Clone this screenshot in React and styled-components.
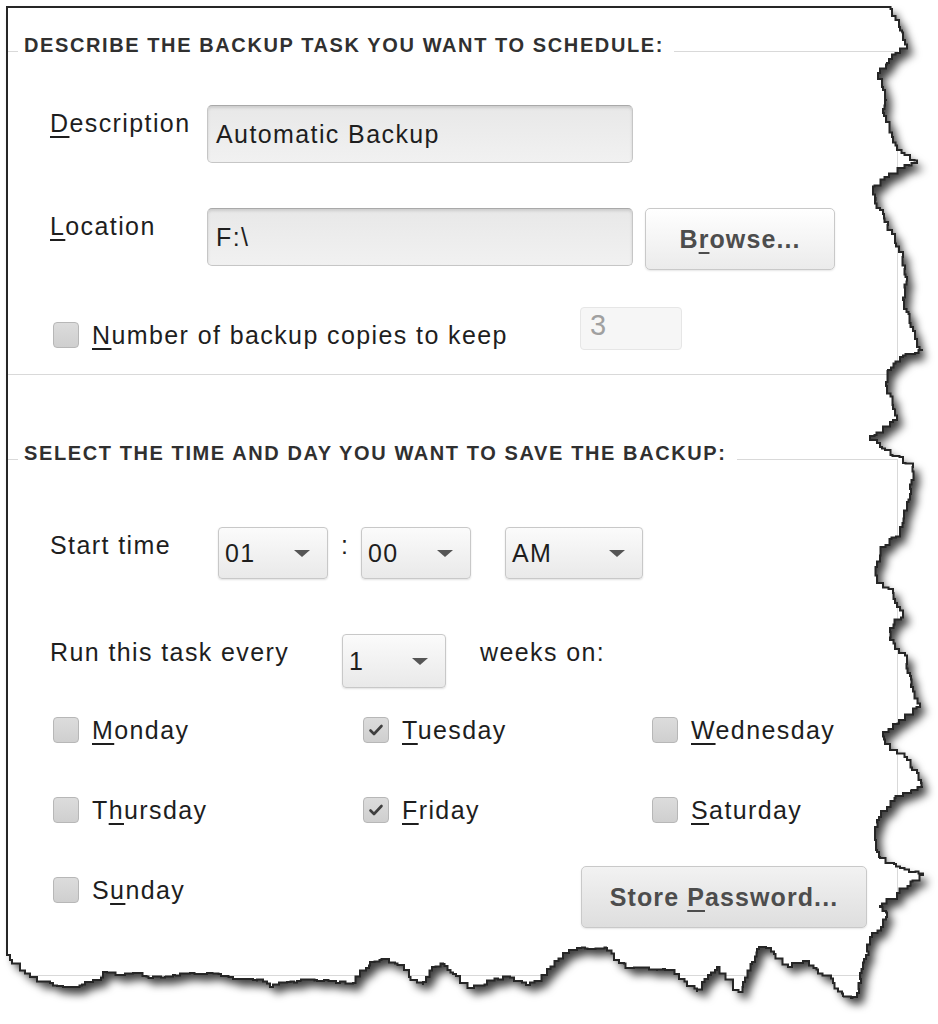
import React, { useMemo } from "react";
import styled, { createGlobalStyle } from "styled-components";

const GlobalStyle = createGlobalStyle`
  html, body { margin: 0; padding: 0; background: #ffffff; }
  body {
    font-family: "Liberation Sans", Arial, sans-serif;
    overflow: hidden;
  }
`;

/* ---------- torn paper outline ---------- */
const RIGHT_AND_BOTTOM = [
  [887, 7], [897, 20], [900, 27], [903, 37], [907, 47], [900, 53], [887, 63], [877, 73],
  [883, 87], [887, 100], [883, 113], [890, 127], [893, 140], [897, 150], [917, 163],
  [900, 168], [887, 177], [873, 190], [875, 200], [883, 210], [890, 230], [903, 257],
  [907, 277], [903, 300], [910, 323], [917, 343], [923, 350], [903, 357], [887, 370],
  [887, 390], [893, 405], [897, 420], [883, 430], [870, 438], [880, 447], [903, 460],
  [913, 467], [913, 480], [907, 507], [900, 533], [883, 547], [877, 567], [877, 580],
  [893, 593], [900, 607], [903, 615], [890, 628], [890, 640], [903, 653], [910, 673],
  [913, 687], [920, 707], [903, 720], [883, 733], [890, 747], [907, 760], [917, 773],
  [923, 787], [903, 793], [887, 807], [877, 820], [875, 840], [880, 857], [900, 868],
  [923, 875], [897, 895], [880, 907], [887, 917], [870, 940], [857, 997],
  [843, 997], [833, 980], [803, 960], [790, 967], [763, 947], [757, 950], [740, 992],
  [717, 967], [697, 992], [670, 970], [630, 968], [617, 960], [607, 947], [577, 948],
  [563, 955], [547, 973], [530, 985], [510, 977], [487, 982], [470, 988], [460, 980],
  [443, 964], [433, 967], [423, 985], [413, 980], [400, 965], [387, 959], [370, 962],
  [360, 972], [353, 983], [317, 980], [287, 982], [273, 987], [267, 982], [233, 977],
  [210, 973], [173, 975], [153, 978], [133, 973], [120, 975], [107, 972], [93, 982],
  [67, 987], [50, 983], [30, 977], [20, 967], [10, 960], [7, 955],
];

function mulberry32(a) {
  return function () {
    a |= 0;
    a = (a + 0x6d2b79f5) | 0;
    let t = Math.imul(a ^ (a >>> 15), 1 | a);
    t = (t + Math.imul(t ^ (t >>> 7), 61 | t)) ^ t;
    return ((t ^ (t >>> 14)) >>> 0) / 4294967296;
  };
}

function buildPath() {
  const rand = mulberry32(20240611);
  const pts = RIGHT_AND_BOTTOM;
  const out = [pts[0]];
  for (let i = 0; i < pts.length - 1; i++) {
    const [ax, ay] = pts[i];
    const [bx, by] = pts[i + 1];
    const len = Math.hypot(bx - ax, by - ay);
    const steps = Math.max(1, Math.round(len / 4));
    for (let s = 1; s <= steps; s++) {
      const t = s / steps;
      let x = ax + (bx - ax) * t;
      let y = ay + (by - ay) * t;
      if (s < steps) {
        x += (rand() - 0.5) * 3;
        y += (rand() - 0.5) * 3;
      }
      x = Math.round(x * 2) / 2;
      y = Math.round(y * 2) / 2;
      const prev = out[out.length - 1];
      if (rand() < 0.5) out.push([x, prev[1]]);
      else out.push([prev[0], y]);
      out.push([x, y]);
    }
  }
  return "M7 7 L" + out.map((p) => p[0] + " " + p[1]).join(" L") + " L7 7 Z";
}

/* ---------- layout ---------- */
const Stage = styled.div`
  position: relative;
  width: 938px;
  height: 1024px;
  overflow: hidden;
  background: #ffffff;
`;

const PaperLayer = styled.svg`
  position: absolute;
  left: 0;
  top: 0;
  z-index: 0;
`;

const OutlineLayer = styled.svg`
  position: absolute;
  left: 0;
  top: 0;
  z-index: 2;
  pointer-events: none;
`;

const Content = styled.div`
  position: relative;
  z-index: 1;
  height: 100%;
  box-sizing: border-box;
  padding: 33px 0 0 7px;
  color: #1e1e1e;
  font-size: 25px;
  letter-spacing: 1.4px;
`;

const GroupBox = styled.section`
  width: 891px;
  margin-top: ${(p) => p.$mt || 0}px;
`;

const HeaderRow = styled.div`
  display: flex;
  align-items: flex-end;
  height: 19px;
`;

const LeadLine = styled.div`
  width: 11px;
  border-bottom: 1px solid #d9d9d9;
`;

const TrailLine = styled.div`
  flex: 1;
  border-bottom: 1px solid #d9d9d9;
`;

const Title = styled.h2`
  margin: 0 10px -5px 6px;
  font-size: 20px;
  line-height: 24px;
  font-weight: bold;
  letter-spacing: 1.6px;
  color: #303030;
  white-space: nowrap;
`;

const Body = styled.div`
  border: 1px solid #d9d9d9;
  border-top: none;
  padding: ${(p) => p.$pt}px 30px ${(p) => p.$pb}px 42px;
`;

const Row = styled.div`
  display: flex;
  align-items: flex-start;
  justify-content: ${(p) => p.$justify || "flex-start"};
  margin-top: ${(p) => p.$mt || 0}px;
`;

const Label = styled.label`
  flex: none;
  width: ${(p) => (p.$w ? `${p.$w}px` : "auto")};
  margin-top: 3px;
  margin-left: ${(p) => p.$ml || 0}px;
  line-height: 30px;
  white-space: nowrap;
`;

const Mn = styled.span`
  text-decoration: underline;
  text-decoration-thickness: 2px;
  text-underline-offset: 4px;
`;

const TextField = styled.div`
  flex: none;
  width: 426px;
  height: 58px;
  box-sizing: border-box;
  display: flex;
  align-items: center;
  padding: 0 8px;
  line-height: 30px;
  border: 1px solid #c6c6c6;
  border-top-color: #a9a9a9;
  border-radius: 5px;
  background: linear-gradient(#e8e8e8, #f1f1f1);
  box-shadow: inset 0 2px 3px rgba(0, 0, 0, 0.12);
`;

const Button = styled.button`
  flex: none;
  width: ${(p) => p.$w}px;
  height: 62px;
  margin: 0 0 0 ${(p) => p.$ml || 0}px;
  padding: 0;
  font-family: inherit;
  font-size: 25px;
  font-weight: bold;
  letter-spacing: 1.1px;
  color: #4d4d4d;
  border: 1px solid #c9c9c9;
  border-radius: 5px;
  background: ${(p) =>
    p.$tone === "gray"
      ? "linear-gradient(#f2f2f2, #dedede)"
      : "linear-gradient(#ffffff, #ebebeb)"};
  box-shadow: 0 1px 2px rgba(0, 0, 0, 0.1);
  cursor: default;
`;

const CheckItem = styled.label`
  flex: none;
  display: flex;
  align-items: center;
  gap: 13px;
  height: 30px;
  line-height: 30px;
  white-space: nowrap;
  width: ${(p) => (p.$w ? `${p.$w}px` : "auto")};
  margin: ${(p) => p.$mt || 0}px 0 0 3px;
`;

const Box = styled.span`
  flex: none;
  width: 26px;
  height: 26px;
  box-sizing: border-box;
  display: flex;
  align-items: center;
  justify-content: center;
  border: 1px solid #b7b7b7;
  border-radius: 4px;
  background: linear-gradient(#dcdcdc, #cfcfcf);
`;

const NumberField = styled.div`
  flex: none;
  width: 102px;
  height: 43px;
  box-sizing: border-box;
  padding: 3px 0 0 9px;
  border: 1px solid #e6e6e6;
  border-radius: 4px;
  background: #f6f6f6;
  color: #a0a0a0;
  font-size: 29px;
  line-height: 1;
  letter-spacing: 0;
`;

const Select = styled.div`
  flex: none;
  width: ${(p) => p.$w}px;
  height: ${(p) => p.$h || 52}px;
  margin-left: ${(p) => p.$ml || 0}px;
  box-sizing: border-box;
  display: flex;
  align-items: center;
  justify-content: space-between;
  padding: 0 17px 0 6px;
  line-height: 30px;
  border: 1px solid #c8c8c8;
  border-radius: 4px;
  background: linear-gradient(#fbfbfb, #e9e9e9);
  box-shadow: 0 1px 2px rgba(0, 0, 0, 0.12);
`;

const Arrow = styled.span`
  width: 0;
  height: 0;
  border-left: 8px solid transparent;
  border-right: 8px solid transparent;
  border-top: 7px solid #555555;
`;

const Colon = styled.span`
  flex: none;
  width: 33px;
  margin-top: 3px;
  text-align: center;
  line-height: 30px;
  letter-spacing: 0;
`;

const DayGrid = styled.div`
  display: grid;
  grid-template-columns: 310px 289px 1fr;
  grid-auto-rows: 30px;
  row-gap: 50px;
  margin-top: ${(p) => p.$mt || 0}px;
`;

function Check({ checked }) {
  return (
    <Box>
      {checked && (
        <svg width="16" height="14" viewBox="0 0 16 14">
          <path d="M2.5 7.5 L6 11 L13.5 3" fill="none" stroke="#3f3f3f" strokeWidth="2.6" strokeLinecap="round" strokeLinejoin="round" />
        </svg>
      )}
    </Box>
  );
}

function Day({ children, checked, mt }) {
  return (
    <CheckItem $mt={mt}>
      <Check checked={checked} />
      <span>{children}</span>
    </CheckItem>
  );
}

function Header({ children }) {
  return (
    <HeaderRow>
      <LeadLine />
      <Title>{children}</Title>
      <TrailLine />
    </HeaderRow>
  );
}

export default function App() {
  const d = useMemo(() => buildPath(), []);
  return (
    <>
      <GlobalStyle />
      <Stage>
        <PaperLayer width="938" height="1024" viewBox="0 0 938 1024">
          <defs>
            <filter id="tornShadow" x="-5%" y="-5%" width="115%" height="115%">
              <feDropShadow dx="6" dy="7" stdDeviation="4.5" floodColor="#000" floodOpacity="0.75" />
            </filter>
          </defs>
          <path d={d} fill="#ffffff" filter="url(#tornShadow)" />
        </PaperLayer>

        <Content style={{ clipPath: `path("${d}")` }}>
          <GroupBox>
            <Header>DESCRIBE THE BACKUP TASK YOU WANT TO SCHEDULE:</Header>
            <Body $pt={53} $pb={24}>
              <Row>
                <Label $w={157}><Mn>D</Mn>escription</Label>
                <TextField>Automatic Backup</TextField>
              </Row>
              <Row $mt={45}>
                <Label $w={157}><Mn>L</Mn>ocation</Label>
                <TextField>F:\</TextField>
                <Button $w={190} $ml={12}>B<Mn>r</Mn>owse...</Button>
              </Row>
              <Row $mt={37}>
                <CheckItem $w={527} $mt={13}>
                  <Check />
                  <span><Mn>N</Mn>umber of backup copies to keep</span>
                </CheckItem>
                <NumberField>3</NumberField>
              </Row>
            </Body>
          </GroupBox>

          <GroupBox $mt={66}>
            <Header>SELECT THE TIME AND DAY YOU WANT TO SAVE THE BACKUP:</Header>
            <Body $pt={67} $pb={47}>
              <Row>
                <Label $w={168}>Start time</Label>
                <Select $w={110}>01<Arrow /></Select>
                <Colon>:</Colon>
                <Select $w={110}>00<Arrow /></Select>
                <Select $w={138} $ml={34}>AM<Arrow /></Select>
              </Row>
              <Row $mt={55}>
                <Label $w={292}>Run this task every</Label>
                <Select $w={104} $h={54}>1<Arrow /></Select>
                <Label $ml={34}>weeks on:</Label>
              </Row>
              <DayGrid $mt={27}>
                <Day><Mn>M</Mn>onday</Day>
                <Day checked><Mn>T</Mn>uesday</Day>
                <Day><Mn>W</Mn>ednesday</Day>
                <Day>T<Mn>h</Mn>ursday</Day>
                <Day checked><Mn>F</Mn>riday</Day>
                <Day><Mn>S</Mn>aturday</Day>
              </DayGrid>
              <Row $mt={41} $justify="space-between">
                <Day mt={9}>S<Mn>u</Mn>nday</Day>
                <Button $w={286} $tone="gray">Store <Mn>P</Mn>assword...</Button>
              </Row>
            </Body>
          </GroupBox>
        </Content>

        <OutlineLayer width="938" height="1024" viewBox="0 0 938 1024">
          <path d={d} fill="none" stroke="#262626" strokeWidth="2" strokeLinejoin="miter" />
        </OutlineLayer>
      </Stage>
    </>
  );
}
